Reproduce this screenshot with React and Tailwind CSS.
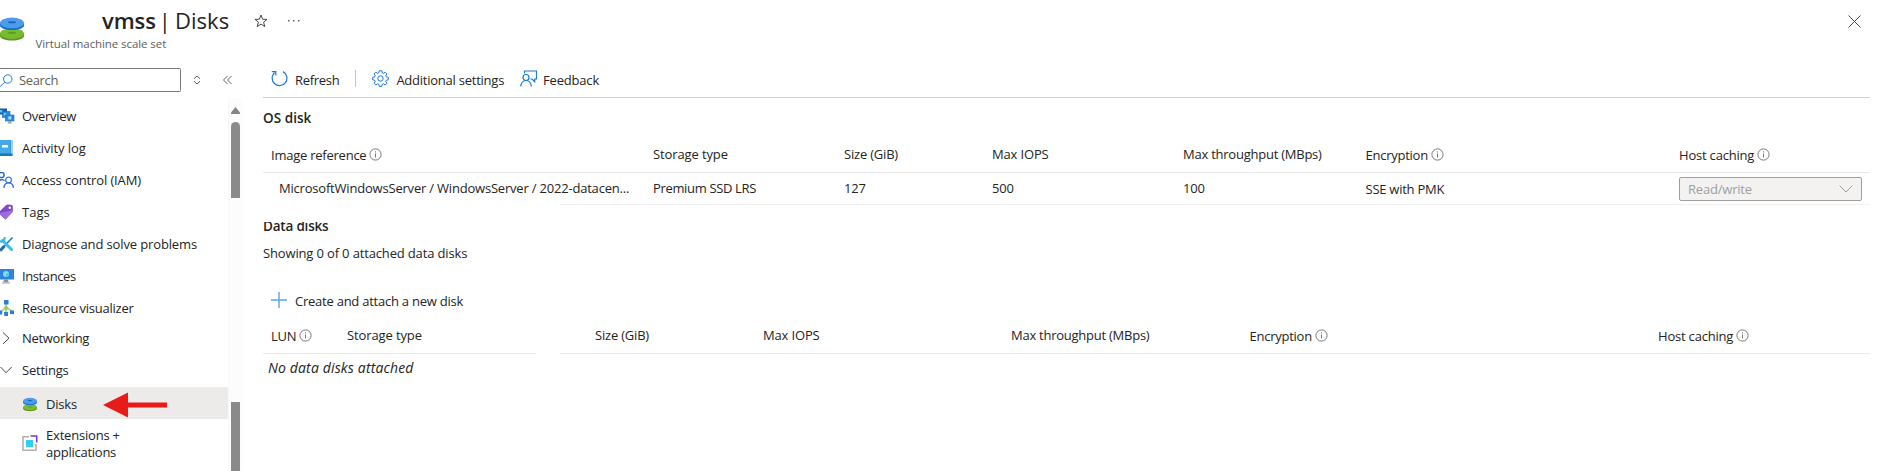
const T = ({ className = "tracking-[-0.15px]", children }) => (
  <span className={`whitespace-nowrap ${className}`}>{children}</span>
);

const DiskIcon = ({ className }) => (
  <svg viewBox="0 0 24 24" className={className}>
    <path d="M0 16.500v2.500c0 2.700 5.400 4.500 12 4.500s12-1.800 12-4.500v-2.500z" fill="#5e9624" />
    <ellipse cx="12" cy="16.600" rx="12" ry="5.300" fill="#76bc2d" />
    <ellipse cx="12" cy="15.800" rx="4" ry="1" fill="#5e9624" />
    <path d="M0 6v2.500c0 2.700 5.400 4.500 12 4.500s12-1.800 12-4.500V6z" fill="#1170cf" />
    <ellipse cx="12" cy="5.900" rx="12" ry="5.300" fill="#4f9bea" />
    <ellipse cx="12" cy="5.300" rx="4" ry="1" fill="#1464bd" />
  </svg>
);

const InfoIcon = () => (
  <svg viewBox="0 0 13 13" className="size-[13px] shrink-0" fill="none">
    <circle cx="6.500" cy="6.500" r="5.600" stroke="#797775" strokeWidth="1" />
    <path d="M6.500 5.500v4M6.500 3.300v1.200" stroke="#797775" strokeWidth="1" />
  </svg>
);

const OverviewIcon = () => (
  <svg viewBox="0 0 15 16" className="h-4 w-[15px]">
    <rect x="0" y="0.500" width="7" height="6" fill="#0f5ba8" />
    <rect x="0" y="2" width="2.500" height="2.500" fill="#5fc4f5" />
    <rect x="2.500" y="3.500" width="7.500" height="6" fill="#2f8be6" stroke="#1467b8" strokeWidth=".6" />
    <rect x="4" y="5" width="2" height="2.500" fill="#6fd0fa" />
    <rect x="5.500" y="7" width="8.500" height="6" fill="#2f86e4" stroke="#1b6cc4" strokeWidth=".6" />
    <rect x="8.300" y="8.200" width="3" height="3.200" fill="#8fe6ff" />
    <path d="M7.500 15.500l1-2.500h2.500l1 2.500z" fill="#a5a5a5" />
  </svg>
);
const ActivityIcon = () => (
  <svg viewBox="0 0 15 16" className="h-4 w-[15px]">
    <path d="M0 0h11.500a1.500 1.500 0 0 1 1.500 1.500v13a1.500 1.500 0 0 1-1.500 1.500H0z" fill="#3a9bdc" />
    <path d="M0 0h10v13H0z" fill="#43a9e8" />
    <path d="M11 0h.6A1.400 1.400 0 0 1 13 1.400V14h-2z" fill="#9fd2f2" />
    <path d="M0 13.500h12V16H0z" fill="#1a78bd" />
    <rect x="2" y="5" width="6" height="2.600" rx=".4" fill="#fff" />
  </svg>
);
const AccessIcon = () => (
  <svg viewBox="0 0 15 16" className="h-4 w-[15px]" fill="none" stroke="#2563c9" strokeWidth="1.400">
    <circle cx="1.500" cy="3" r="2.600" />
    <path d="M0 8.500c1.500-1.500 3.500-1 4.500.2" />
    <circle cx="8.500" cy="8" r="2.900" stroke="#3f8ae6" />
    <path d="M3.800 15.800c.4-3.400 2.500-4.900 4.700-4.900s4.600 1.500 5 4.900" stroke="#2b6fd6" />
  </svg>
);
const TagIcon = () => (
  <svg viewBox="0 0 15 16" className="h-4 w-[15px]">
    <path d="M0 7L6 1.200Q7 .3 8.500.5l3.300.5q1 .2 1 1.300l.1 4.500q0 1-.8 1.800L5.500 15.600 0 10.500z" fill="#8148c8" />
    <path d="M0 9l12.700-3v1q0 1-.8 1.700L5.500 15.600 0 10.500z" fill="#9f6cdc" />
    <circle cx="9.800" cy="3.700" r="1.200" fill="#fff" />
  </svg>
);
const DiagnoseIcon = () => (
  <svg viewBox="0 0 15 16" className="h-4 w-[15px]" fill="none">
    <path d="M12.500 1.500L1 13.500" stroke="#1f7fb8" strokeWidth="1.600" />
    <path d="M4.500 10L0 14.800" stroke="#1b6fa8" strokeWidth="3" />
    <path d="M2.500 4.500l9 9" stroke="#35bfe8" strokeWidth="3" strokeLinecap="round" />
    <path d="M0 4.800C2 6.500 5 5 4.500 1.200" stroke="#35bfe8" strokeWidth="2.400" />
  </svg>
);
const InstancesIcon = () => (
  <svg viewBox="0 0 15 16" className="h-4 w-[15px]">
    <rect x="0" y="1" width="14" height="10.500" fill="#2f82e0" />
    <circle cx="6" cy="6" r="3" fill="#7fe3f7" />
    <path d="M6 6l2.600-1.500v3L6 9z" fill="#50c4ea" />
    <path d="M4 11.500h4l.7 3H3.300z" fill="#8e8e8e" />
    <rect x="2" y="14.300" width="8" height="1.300" fill="#b5b5b5" />
  </svg>
);
const VisualizerIcon = () => (
  <svg viewBox="0 0 15 16" className="h-4 w-[15px]">
    <path d="M6 4v9M6 7L1 11.500M6 7l6.500 4.500" stroke="#a4d867" strokeWidth="1.600" />
    <circle cx="6" cy="8" r="2" fill="#8fd04e" />
    <rect x="4" y="0" width="4.500" height="4.500" fill="#2a7de0" />
    <rect x="0" y="10.500" width="2.200" height="4" fill="#2a7de0" />
    <rect x="4.200" y="12" width="3.800" height="4" fill="#2a7de0" />
    <rect x="10" y="10.500" width="4" height="3.600" fill="#2a7de0" />
  </svg>
);
const ChevronRight = () => (
  <svg viewBox="0 0 15 16" className="h-4 w-[15px]" fill="none" stroke="#4a4846"><path d="M3 2.500l6 5.700-6 5.700" /></svg>
);
const ChevronDown = () => (
  <svg viewBox="0 0 15 16" className="h-4 w-[15px]" fill="none" stroke="#4a4846"><path d="M.5 5l5.500 5.700L11.700 5" /></svg>
);

const NAV = [
  [OverviewIcon, "Overview", "tracking-[-0.3px]"],
  [ActivityIcon, "Activity log", "tracking-[-0.1px]"],
  [AccessIcon, "Access control (IAM)", "tracking-[-0.12px]"],
  [TagIcon, "Tags", "tracking-normal"],
  [DiagnoseIcon, "Diagnose and solve problems", "tracking-[-0.13px]"],
  [InstancesIcon, "Instances", "tracking-[-0.4px]"],
  [VisualizerIcon, "Resource visualizer", "tracking-[-0.23px]"],
];

const NavItem = ({ Icon, label, track, className }) => (
  <div className={`flex items-center gap-[7px] ${className}`}>
    <Icon />
    <T className={track}>{label}</T>
  </div>
);

const Head = ({ label, track, info, className = "" }) => (
  <div className={`flex items-center gap-[3px] ${info ? "pt-px" : ""} ${className}`}>
    <T className={track}>{label}</T>
    {info && <InfoIcon />}
  </div>
);

export default function App() {
  return (
    <div className="flex h-[471px] w-[1879px] flex-col overflow-hidden bg-white font-['Open_Sans',sans-serif] text-[13px] leading-4 text-[#252423]">
      <header className="flex h-[60px] shrink-0 justify-between">
        <div className="flex">
          <DiskIcon className="mt-[17px] size-6" />
          <div className="ml-[11px] flex flex-col">
            <div className="flex h-[36px] items-center pt-[5px] pl-[67px] text-[22px] leading-[30px]">
              <T className="-mt-px font-semibold tracking-[-0.1px]">vmss</T>
              <T className="-mt-px ml-[3px] [word-spacing:-1.5px]">| Disks</T>
              <svg viewBox="0 0 14 14" className="ml-[25px] size-[14px]" fill="none" stroke="#4a4846"><path d="M7 1l1.600 4.200 4.400.2-3.400 2.800 1.200 4.400L7 10.100l-3.800 2.500 1.200-4.400L1 5.400l4.400-.2z" /></svg>
              <svg viewBox="0 0 12 4" className="ml-5 h-1 w-3" fill="#605e5c"><path d="M0 1h1.500v1.500H0zM5 1h1.500v1.500H5zM10 1h1.500v1.500H10z" /></svg>
            </div>
            <T className="ml-[0.5px] text-[11.5px] leading-4 tracking-[-0.08px] text-[#605e5c]">Virtual machine scale set</T>
          </div>
        </div>
        <svg viewBox="0 0 13 13" className="mt-[15px] mr-[18px] size-[13px]" stroke="#4a4846"><path d="M.5.5l12 12M12.500.5l-12 12" /></svg>
      </header>

      <div className="flex min-h-0 flex-1">
        <aside className="flex w-[243px] shrink-0 flex-col">
          <div className="flex h-[39px] shrink-0 items-start pt-2">
            <div className="flex h-6 w-[181px] items-center rounded-r-[2px] border border-l-0 border-[#7a7876] text-[#605e5c]">
              <svg viewBox="0 0 13 13" className="size-[13px]" fill="none" stroke="#1a78d6"><circle cx="7.800" cy="5" r="4.200" /><path d="M4.800 8L0 12.800" /></svg>
              <T className="ml-[6px] tracking-[-0.35px]">Search</T>
            </div>
            <svg viewBox="0 0 8 10" className="mt-[7px] ml-[12px] h-[10px] w-2" fill="none" stroke="#605e5c"><path d="M1 3.800L4 1l3 2.800M1 6.200L4 9l3-2.800" /></svg>
            <svg viewBox="0 0 9 10" className="mt-[7px] ml-[22px] h-[10px] w-[9px]" fill="none" stroke="#605e5c"><path d="M4.500 1l-4 4 4 4M8.500 1l-4 4 4 4" /></svg>
          </div>
          <div className="flex min-h-0 flex-1">
            <nav className="relative flex w-[228px] flex-col pt-px">
              {NAV.map(([Icon, label, track]) => (
                <NavItem key={label} Icon={Icon} label={label} track={track} className="h-8 shrink-0" />
              ))}
              <NavItem Icon={ChevronRight} label="Networking" track="tracking-[-0.3px]" className="h-[30px] shrink-0 pb-0.5" />
              <NavItem Icon={ChevronDown} label="Settings" track="tracking-[-0.21px]" className="h-[33px] shrink-0 pb-px" />
              <div className="flex h-8 shrink-0 items-center bg-[#edebe9] pt-0.5 pl-[23px]">
                <DiskIcon className="h-[15px] w-[14px]" />
                <T className="ml-[9px] tracking-[-0.2px]">Disks</T>
              </div>
              <div className="flex h-[50px] shrink-0 items-start pt-2 pl-[22px]">
                <svg viewBox="0 0 16 16" className="mt-2 size-4" fill="none">
                  <path d="M7 1.800H1v13.500h13V9" stroke="#b3b0ad" strokeWidth="1.600" />
                  <path d="M8.500 1h6.200v6.500" stroke="#773adc" strokeWidth="1.600" />
                  <rect x="4" y="5" width="7" height="7" fill="#32d0f0" />
                </svg>
                <div className="ml-2 flex flex-col leading-[17px]">
                  <T className="tracking-[-0.2px]">Extensions +</T>
                  <T className="tracking-[-0.25px]">applications</T>
                </div>
              </div>
              <svg viewBox="0 0 64 26" className="absolute top-[293px] left-[103px] h-[26px] w-16" fill="#e81b1b"><path d="M0 13L25 .5v10h39v5H25v10z" /></svg>
            </nav>
            <div className="flex w-[14px] flex-col items-center border-l border-[#f7f7f7] bg-[#fcfcfc]">
              <svg viewBox="0 0 9 7" className="mt-2 h-[7px] w-[9px]" fill="#868686"><path d="M4.500 0L9 5.500V7H0V5.500z" /></svg>
              <div className="mt-2 h-[76px] w-[9px] rounded-t-full bg-[#8a8a8a]" />
              <div className="mt-[204px] w-[9px] flex-1 bg-[#8a8a8a]" />
            </div>
          </div>
        </aside>

        <main className="flex min-w-0 flex-1 flex-col pr-[9px] pl-5">
          <div className="flex h-[38px] shrink-0 items-center border-b border-[#d2d0ce] pl-2">
            <svg viewBox="0 0 17 17" className="size-[17px]" fill="none" stroke="#1a78d6" strokeWidth="1.200"><path d="M3.500 2.700a7.400 7.400 0 1 0 8.500-1.100M.8 1.600h4v4" /></svg>
            <T className="mt-[3px] ml-[7px] tracking-[-0.3px]">Refresh</T>
            <div className="ml-4 h-[17px] w-px bg-[#c8c6c4]" />
            <svg viewBox="0 0 17 17" className="ml-4 size-[17px]" fill="none" stroke="#1a78d6"><circle cx="8.500" cy="8.500" r="2.700" /><path d="M7.200.8h2.600l.4 2 1.300.5 1.700-1.100 1.700 1.700-1.100 1.800.5 1.200 2 .4v2.500l-2 .4-.5 1.300 1.100 1.700-1.700 1.800-1.800-1.200-1.200.5-.4 2H7.200l-.4-2-1.300-.5-1.700 1.200L2 13.200l1.200-1.700-.5-1.300-2-.4V7.300l2-.4.5-1.300L2 3.900l1.800-1.700 1.700 1.100 1.300-.5z" /></svg>
            <T className="mt-[3px] ml-[7px] tracking-[-0.24px]">Additional settings</T>
            <svg viewBox="0 0 17 17" className="ml-4 size-[17px]" fill="none" stroke="#1a78d6" strokeWidth="1.200"><path d="M4.500 3.500V1h12v8h-1.800v2.700L12 9h-1.500" /><circle cx="6" cy="7.500" r="3" /><path d="M.7 16.500c.5-4 2.600-6 5.300-6s4.800 2 5.300 6" /></svg>
            <T className="mt-[3px] ml-[6px] tracking-[-0.2px]">Feedback</T>
          </div>

          <section className="flex flex-col">
            <h2 className="mt-[12px] flex h-4 text-[13.5px] font-semibold leading-4"><T className="tracking-[0.05px]">OS disk</T></h2>
            <div className="mt-[10px] grid h-[37px] grid-cols-[382px_191px_148px_191px_182.500px_313.500px_auto] items-center border-b border-[#e8e8e8] pl-2">
              <Head label="Image reference" track="tracking-[-0.24px]" info />
              <Head label="Storage type" track="tracking-[-0.12px]" />
              <Head label="Size (GiB)" track="tracking-[-0.2px]" />
              <Head label="Max IOPS" track="tracking-[-0.15px]" />
              <Head label="Max throughput (MBps)" track="tracking-[-0.24px]" />
              <Head label="Encryption" track="tracking-[-0.25px]" info />
              <Head label="Host caching" track="tracking-[-0.2px]" info />
            </div>
            <div className="grid h-[31px] grid-cols-[382px_191px_148px_191px_182.500px_313.500px_auto] items-center pt-px pl-2">
              <T className="-mt-0.5 pl-2 tracking-[-0.2px]">MicrosoftWindowsServer / WindowsServer / 2022-datacen...</T>
              <T className="-mt-0.5 tracking-[-0.34px]">Premium SSD LRS</T>
              <T className="-mt-0.5 tracking-[-0.15px]">127</T>
              <T className="-mt-0.5 tracking-[-0.15px]">500</T>
              <T className="-mt-0.5 tracking-[-0.15px]">100</T>
              <T className="tracking-[-0.25px]">SSE with PMK</T>
              <div className="flex h-6 w-[183px] items-center justify-between rounded-[2px] border border-[#a19f9d] bg-[#f3f2f1] pr-2 pl-2 text-[#a19f9d]">
                <T className="tracking-[-0.2px]">Read/write</T>
                <svg viewBox="0 0 14 8" className="h-2 w-[14px]" fill="none" stroke="#a19f9d"><path d="M.5.500L7 7 13.500.500" /></svg>
              </div>
            </div>
            <div className="ml-[297px] h-px bg-[#f0f0f0]" />
          </section>

          <section className="flex flex-col">
            <h2 className="mt-[17px] flex h-3 items-end overflow-hidden text-[13.5px] font-semibold leading-4"><T className="tracking-[-0.2px]">Data disks</T></h2>
            <p className="mt-[11px] flex"><T className="tracking-[-0.15px]">Showing 0 of 0 attached data disks</T></p>
            <div className="mt-7 flex h-[22px] items-center pl-2">
              <svg viewBox="0 0 16 16" className="size-4" stroke="#5aa5e6" strokeWidth="1.400"><path d="M8 0v16M0 8h16" /></svg>
              <T className="mt-0.5 ml-2 tracking-[-0.24px]">Create and attach a new disk</T>
            </div>
            <div className="flex gap-6">
              <div className="grid h-[43px] w-[273px] grid-cols-[76px_auto] items-center border-b border-[#e8e8e8] pt-1.5 pl-2">
                <Head label="LUN" track="tracking-[-0.25px]" info />
                <Head label="Storage type" track="tracking-[-0.12px]" />
              </div>
              <div className="grid h-[43px] flex-1 grid-cols-[168px_248px_238.500px_408.500px_auto] items-center border-b border-[#e8e8e8] pt-1.5 pl-[35px]">
                <Head label="Size (GiB)" track="tracking-[-0.2px]" />
                <Head label="Max IOPS" track="tracking-[-0.15px]" />
                <Head label="Max throughput (MBps)" track="tracking-[-0.25px]" />
                <Head label="Encryption" track="tracking-[-0.25px]" info />
                <Head label="Host caching" track="tracking-[-0.2px]" info />
              </div>
            </div>
            <p className="mt-1 flex pl-[5px] text-[14px] italic leading-5"><T className="tracking-[0.15px]">No data disks attached</T></p>
          </section>
        </main>
      </div>
    </div>
  );
}
